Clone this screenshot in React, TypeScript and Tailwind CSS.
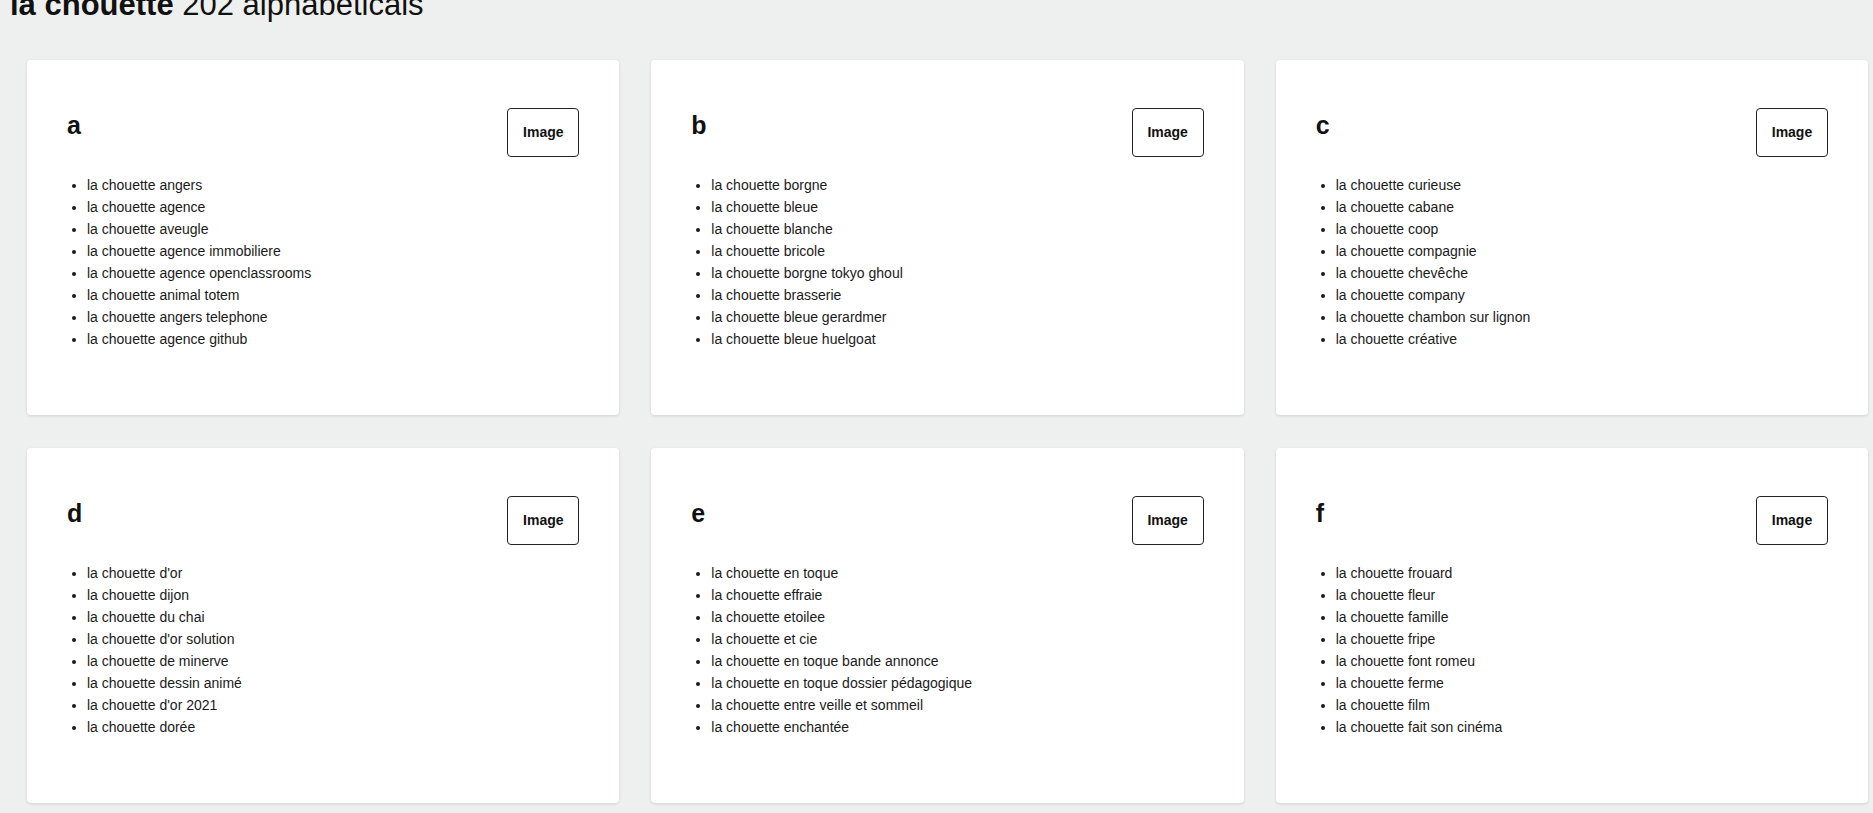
type Groupe = {
  lettre: string;
  items: string[];
};

const GROUPES: Groupe[] = [
  {
    lettre: "a",
    items: [
      "la chouette angers",
      "la chouette agence",
      "la chouette aveugle",
      "la chouette agence immobiliere",
      "la chouette agence openclassrooms",
      "la chouette animal totem",
      "la chouette angers telephone",
      "la chouette agence github",
    ],
  },
  {
    lettre: "b",
    items: [
      "la chouette borgne",
      "la chouette bleue",
      "la chouette blanche",
      "la chouette bricole",
      "la chouette borgne tokyo ghoul",
      "la chouette brasserie",
      "la chouette bleue gerardmer",
      "la chouette bleue huelgoat",
    ],
  },
  {
    lettre: "c",
    items: [
      "la chouette curieuse",
      "la chouette cabane",
      "la chouette coop",
      "la chouette compagnie",
      "la chouette chevêche",
      "la chouette company",
      "la chouette chambon sur lignon",
      "la chouette créative",
    ],
  },
  {
    lettre: "d",
    items: [
      "la chouette d'or",
      "la chouette dijon",
      "la chouette du chai",
      "la chouette d'or solution",
      "la chouette de minerve",
      "la chouette dessin animé",
      "la chouette d'or 2021",
      "la chouette dorée",
    ],
  },
  {
    lettre: "e",
    items: [
      "la chouette en toque",
      "la chouette effraie",
      "la chouette etoilee",
      "la chouette et cie",
      "la chouette en toque bande annonce",
      "la chouette en toque dossier pédagogique",
      "la chouette entre veille et sommeil",
      "la chouette enchantée",
    ],
  },
  {
    lettre: "f",
    items: [
      "la chouette frouard",
      "la chouette fleur",
      "la chouette famille",
      "la chouette fripe",
      "la chouette font romeu",
      "la chouette ferme",
      "la chouette film",
      "la chouette fait son cinéma",
    ],
  },
];

export default function App() {
  return (
    <main className="min-h-screen bg-[#eef0ef] pb-10 font-['Liberation_Sans',Arial,sans-serif] text-[#111]">
      <h1 className="mt-[-13px] pl-[10px] text-[31px] leading-[36px] font-normal text-[#111]">
        <strong className="font-bold">la chouette</strong> 202 alphabeticals
      </h1>

      <section className="mt-[37px] grid grid-cols-3 gap-x-[32px] gap-y-[33px] pl-[27px] pr-[5px]">
        {GROUPES.map((groupe) => (
          <article
            key={groupe.lettre}
            className="h-[355px] rounded-[4px] bg-white px-10 pt-12 shadow-[0_1px_3px_rgba(0,0,0,0.12)]"
          >
            <div className="flex items-start justify-between">
              <h2 className="mt-[1px] text-[25px] leading-8 font-bold text-[#111]">
                {groupe.lettre}
              </h2>
              <div className="flex h-[49px] w-[72px] items-center justify-center rounded-[4px] border border-[#222] text-[14px] font-bold text-[#111]">
                Image
              </div>
            </div>

            <ul className="mt-[17px] list-disc pl-5 text-[14px] leading-[22px] text-[#1a1a1a]">
              {groupe.items.map((item) => (
                <li key={item}>{item}</li>
              ))}
            </ul>
          </article>
        ))}
      </section>
    </main>
  );
}
